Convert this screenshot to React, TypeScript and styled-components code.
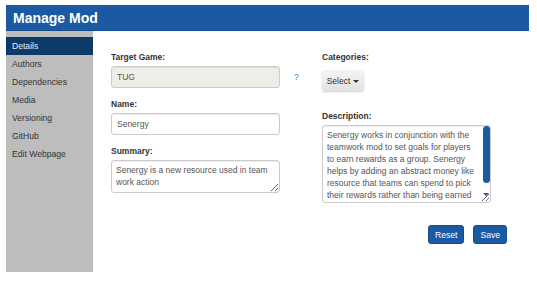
import styled, { createGlobalStyle } from "styled-components";

const GlobalStyle = createGlobalStyle`
    body {
        margin: 0;
        background: #ffffff;
        font-family: "Liberation Sans", Arial, sans-serif;
        color: #333333;
    }
`

const Page = styled.div`
    width: 523px;
    margin: 5px 0 0 6px;
`

const Header = styled.header`
    height: 26px;
    background-color: #1b5aa3;
    border-bottom: 1px solid #164c8c;
    box-sizing: border-box;
    display: flex;
    align-items: center;
    padding-left: 7px;
`

const Title = styled.h1`
    margin: 0;
    font-size: 14px;
    font-weight: bold;
    color: #ffffff;
`

const Body = styled.div`
    display: flex;
`

const Sidebar = styled.nav`
    width: 87px;
    height: 241px;
    background-color: #bdbdbd;
    padding-top: 6px;
    box-sizing: border-box;
    display: flex;
    flex-direction: column;
`

const NavItem = styled.div<{ $active?: boolean }>`
    height: 18px;
    line-height: 18px;
    padding-left: 6px;
    font-size: 8.6px;
    color: ${p => p.$active ? "#e8eef6" : "#333333"};
    background-color: ${p => p.$active ? "#0e3a6a" : "transparent"};
`

const Main = styled.main`
    flex: 1;
    padding: 19px 22px 0 18px;
`

const Columns = styled.div`
    display: flex;
`

const Column = styled.div<{ $width: number }>`
    width: ${p => p.$width}px;
    display: flex;
    flex-direction: column;
`

const Label = styled.label`
    display: block;
    font-size: 8.5px;
    font-weight: bold;
    line-height: 14px;
    color: #333333;
`

const FieldRow = styled.div`
    display: flex;
    align-items: center;
    margin-top: 2px;
`

const TextInput = styled.input`
    width: 169px;
    height: 22px;
    box-sizing: border-box;
    border: 1px solid #cccccc;
    border-radius: 3px;
    padding: 0 5px;
    font-family: inherit;
    font-size: 8.5px;
    color: #555555;
    background-color: #ffffff;
    box-shadow: inset 0 1px 1px rgba(0, 0, 0, 0.075);
    outline: none;

    &:disabled {
        background-color: #eeeee9;
        color: #555555;
    }
`

const Help = styled.span`
    margin-left: 14px;
    font-size: 8.5px;
    color: #3a78c0;
`

const Spacer = styled.div<{ $h: number }>`
    height: ${p => p.$h}px;
`

const TextArea = styled.textarea<{ $height: number }>`
    display: block;
    width: 169px;
    height: ${p => p.$height}px;
    box-sizing: border-box;
    border: 1px solid #cccccc;
    border-radius: 3px;
    padding: 3px 4px;
    font-family: inherit;
    font-size: 8.5px;
    line-height: 12px;
    color: #555555;
    resize: vertical;
    outline: none;
    box-shadow: inset 0 1px 1px rgba(0, 0, 0, 0.075);
`

const TextAreaWrap = styled.div`
    position: relative;
    margin-top: 2px;
`

const ScrollArea = styled(TextArea)`
    overflow-y: hidden;
    padding-right: 12px;
`

const ScrollThumb = styled.div`
    position: absolute;
    top: 1px;
    right: 1px;
    width: 7px;
    height: 57px;
    border-radius: 4px;
    background-color: #1b5aa3;
`

const ScrollDown = styled.div`
    position: absolute;
    right: 2px;
    bottom: 7px;
    border-top: 3px solid #1b5aa3;
    border-left: 3px solid transparent;
    border-right: 3px solid transparent;
`

const SelectButton = styled.button`
    margin-top: 6px;
    width: 42px;
    height: 21px;
    border: none;
    border-radius: 3px;
    background: linear-gradient(#f4f4f4, #e2e2e2);
    box-shadow: 0 1px 2px rgba(0, 0, 0, 0.2);
    font-family: inherit;
    font-size: 8.5px;
    color: #333333;
    padding: 0;
`

const Caret = styled.span`
    display: inline-block;
    margin-left: 3px;
    vertical-align: middle;
    border-top: 3px solid #333333;
    border-left: 3px solid transparent;
    border-right: 3px solid transparent;
`

const Actions = styled.div`
    display: flex;
    justify-content: flex-end;
    gap: 9px;
    margin-top: 22px;
`

const ActionButton = styled.button`
    height: 19px;
    padding: 0 6px;
    border: 1px solid #164c8c;
    border-radius: 3px;
    background-color: #1b5aa3;
    color: #ffffff;
    font-family: inherit;
    font-size: 8.6px;
`

const navItems = ["Details", "Authors", "Dependencies", "Media", "Versioning", "GitHub", "Edit Webpage"]

const description = "Senergy works in conjunction with the teamwork mod to set goals for players to earn rewards as a group. Senergy helps by adding an abstract money like resource that teams can spend to pick their rewards rather than being earned directly by completing goals."

export default function App() {
  return (
    <Page>
        <GlobalStyle />
        <Header>
            <Title>Manage Mod</Title>
        </Header>
        <Body>
            <Sidebar>
                {navItems.map((item, i) => (
                    <NavItem key={item} $active={i === 0}>{item}</NavItem>
                ))}
            </Sidebar>

            <Main>
                <Columns>
                    <Column $width={211}>
                        <Label>Target Game:</Label>
                        <FieldRow>
                            <TextInput value="TUG" disabled readOnly />
                            <Help>?</Help>
                        </FieldRow>

                        <Spacer $h={9} />
                        <Label>Name:</Label>
                        <FieldRow>
                            <TextInput defaultValue="Senergy" />
                        </FieldRow>

                        <Spacer $h={9} />
                        <Label>Summary:</Label>
                        <TextAreaWrap>
                            <TextArea $height={33} defaultValue="Senergy is a new resource used in team work action" />
                        </TextAreaWrap>
                    </Column>

                    <Column $width={169}>
                        <Label>Categories:</Label>
                        <div>
                            <SelectButton>Select<Caret /></SelectButton>
                        </div>

                        <Spacer $h={18} />
                        <Label>Description:</Label>
                        <TextAreaWrap>
                            <ScrollArea $height={78} defaultValue={description} />
                            <ScrollThumb />
                            <ScrollDown />
                        </TextAreaWrap>
                    </Column>
                </Columns>

                <Actions>
                    <ActionButton>Reset</ActionButton>
                    <ActionButton>Save</ActionButton>
                </Actions>
            </Main>
        </Body>
    </Page>
  )
}
